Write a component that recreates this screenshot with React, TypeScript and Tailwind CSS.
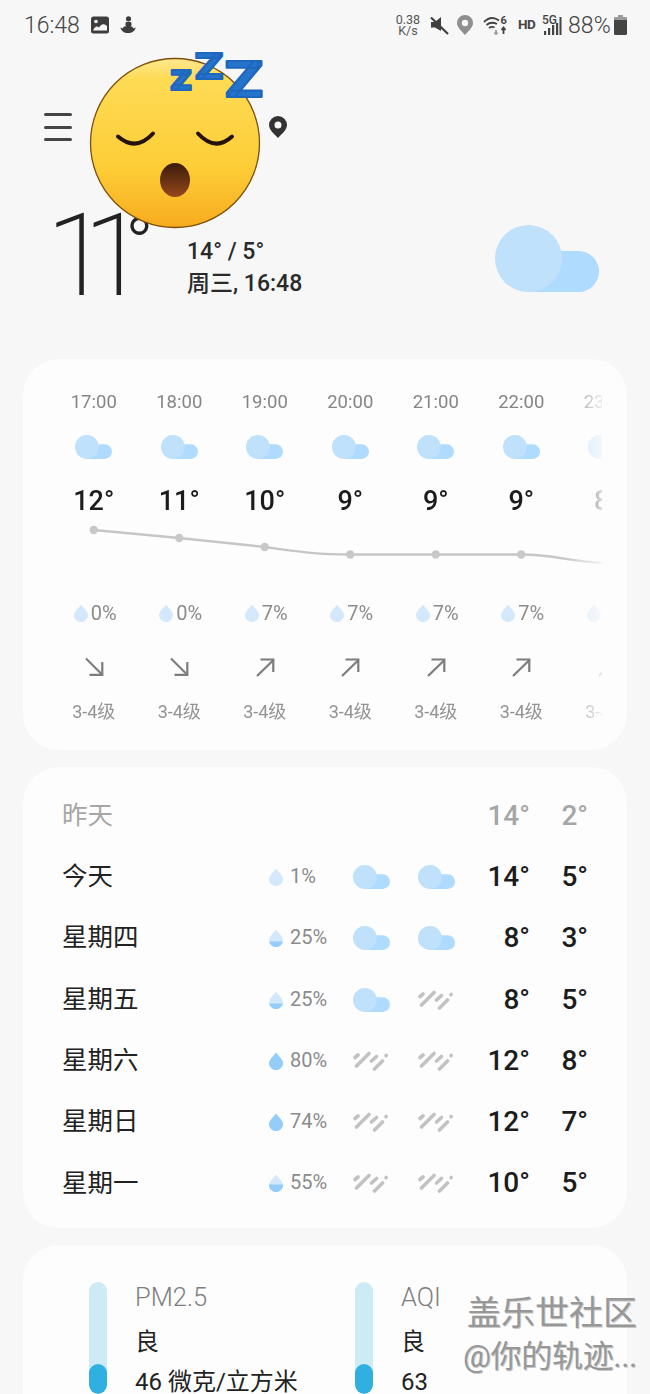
import React from "react";

const FONT = "font-['Roboto','Noto_Sans_CJK_SC',sans-serif]";

function Cloud({ w = 37, h = 24 }: { w?: number; h?: number }) {
  return (
    <svg width={w} height={h} viewBox="0 0 104 67" className="block">
      <path d="M33.500 67 H83.500 A20.500 20.500 0 0 0 83.500 26 H40 Z" fill="#aedbff" />
      <circle cx="33.500" cy="33.500" r="33.500" fill="#bfe1fc" />
    </svg>
  );
}

function Rain() {
  return (
    <svg width="37" height="20" viewBox="0 0 37 20" className="block" stroke="#c2c2c2" strokeWidth="3.600" strokeLinecap="round">
      <path d="M2 6.500 L5 4" />
      <path d="M3.500 15 L16 2.500" />
      <path d="M18.500 10 L23.500 5.500" />
      <path d="M21.500 18 L29.500 10" />
      <path d="M33 4.700 L33.200 4.500" />
    </svg>
  );
}

function Drop({ level, id, size = 14 }: { level: number; id: string; size?: number }) {
  const y = 18 - (18 * level) / 100;
  return (
    <svg width={size} height={size * 1.29} viewBox="0 0 14 18" className="block shrink-0">
      <defs>
        <clipPath id={id}>
          <rect x="0" y={y} width="14" height="18" />
        </clipPath>
      </defs>
      <path d="M7 0.500 C9 3.500 14 7.500 14 11.200 A7 6.800 0 0 1 0 11.200 C0 7.500 5 3.500 7 0.500 Z" fill="#d3e8fa" />
      <path d="M7 0.500 C9 3.500 14 7.500 14 11.200 A7 6.800 0 0 1 0 11.200 C0 7.500 5 3.500 7 0.500 Z" fill="#94cdf9" clipPath={`url(#${id})`} />
    </svg>
  );
}

function Arrow({ up }: { up: boolean }) {
  return (
    <svg width="20" height="20" viewBox="0 0 20 20" fill="none" stroke="#7c7c7c" strokeWidth="2.200" className="block">
      {up ? (
        <g>
          <path d="M2 19 L18.500 3" />
          <path d="M5.500 2.500 H18.300 V15" />
        </g>
      ) : (
        <g>
          <path d="M2 1.500 L18.500 18" />
          <path d="M18.300 5 V17.800 H5.500" />
        </g>
      )}
    </svg>
  );
}

const hours = [
  { t: "17:00", d: "12°", p: "0%", up: false },
  { t: "18:00", d: "11°", p: "0%", up: false },
  { t: "19:00", d: "10°", p: "7%", up: true },
  { t: "20:00", d: "9°", p: "7%", up: true },
  { t: "21:00", d: "9°", p: "7%", up: true },
  { t: "22:00", d: "9°", p: "7%", up: true },
  { t: "23:00", d: "8°", p: "7%", up: true },
];

const days = [
  { n: "今天", p: "1%", l: 0, a: "c", b: "c", hi: "14°", lo: "5°" },
  { n: "星期四", p: "25%", l: 30, a: "c", b: "c", hi: "8°", lo: "3°" },
  { n: "星期五", p: "25%", l: 30, a: "c", b: "r", hi: "8°", lo: "5°" },
  { n: "星期六", p: "80%", l: 100, a: "r", b: "r", hi: "12°", lo: "8°" },
  { n: "星期日", p: "74%", l: 100, a: "r", b: "r", hi: "12°", lo: "7°" },
  { n: "星期一", p: "55%", l: 42, a: "r", b: "r", hi: "10°", lo: "5°" },
];

const dots: [number, number][] = [
  [42.750, 14],
  [128.250, 22],
  [213.750, 31],
  [299.250, 38.500],
  [384.750, 38.500],
  [470.250, 38.500],
];

function Emoji() {
  return (
    <svg width="185" height="185" viewBox="85 50 185 185" className="absolute left-[85px] top-[50px]">
      <defs>
        <linearGradient id="face" x1="0" y1="0" x2="0" y2="1">
          <stop offset="0%" stopColor="#ffe88f" />
          <stop offset="12%" stopColor="#fedb55" />
          <stop offset="65%" stopColor="#fdcd36" />
          <stop offset="100%" stopColor="#f7ab1f" />
        </linearGradient>
        <linearGradient id="mouth" x1="0" y1="0" x2="0" y2="1">
          <stop offset="0%" stopColor="#3b1a0a" />
          <stop offset="100%" stopColor="#96481a" />
        </linearGradient>
      </defs>
      <circle cx="175" cy="143" r="84.500" fill="url(#face)" stroke="#7e4f0c" strokeWidth="1.300" />
      <path d="M118 136.500 Q136 152 153 133.500" fill="none" stroke="#26120a" strokeWidth="4" strokeLinecap="round" />
      <path d="M198 133.500 Q215 152 232 136.500" fill="none" stroke="#26120a" strokeWidth="4" strokeLinecap="round" />
      <ellipse cx="175" cy="180" rx="15" ry="17" fill="url(#mouth)" />
      <g fontFamily="Roboto" fontWeight="900" fill="#2474cc" stroke="#1f66bd" strokeWidth="2" strokeLinejoin="round">
        <text x="170" y="89.500" fontSize="36" textLength="22" lengthAdjust="spacingAndGlyphs">z</text>
        <text x="195" y="79" fontSize="36" textLength="28" lengthAdjust="spacingAndGlyphs">Z</text>
        <text x="225" y="97" fontSize="50" textLength="38" lengthAdjust="spacingAndGlyphs">Z</text>
      </g>
    </svg>
  );
}

function StatusBar() {
  return (
    <div className="flex h-[50px] items-center pl-[24px] pr-[23px] text-[#444]">
      <span className="text-[23px] font-light leading-none">16:48</span>
      <svg width="18" height="18" viewBox="0 0 18 18" className="ml-[11px]">
        <rect x="0" y="0.500" width="18" height="17" rx="2.500" fill="#3d3d3d" />
        <circle cx="5" cy="5.500" r="1.800" fill="#f7f7f7" />
        <path d="M2 14.500 C4 10 6 9.500 8 11.500 C10 9 12 6.500 16 10 V14.500 Z" fill="#f7f7f7" />
      </svg>
      <svg width="16" height="18" viewBox="0 0 16 18" className="ml-[11px]" fill="#3d3d3d">
        <circle cx="8.500" cy="2.800" r="2.600" />
        <path d="M6 6 H11 C12 8 11.500 10 10.500 11 H6.500 C5.500 10 5 8 6 6 Z" />
        <path d="M0.500 11.500 C1 15 4 17 8 17 C12 17 15.500 15 15.500 11.500 L13.500 12.500 C12.500 10.500 11 10 10 10.500 L6.500 10.500 C5 10 3.500 10.500 2.700 12.500 Z" />
      </svg>
      <div className="ml-auto w-[26px] text-center text-[12.500px] leading-[11.500px] text-[#555]">
        <div>0.38</div>
        <div>K/s</div>
      </div>
      <svg width="19" height="19" viewBox="0 0 19 19" className="ml-[9px]" fill="#3f3f3f">
        <path d="M1 6 H5 L11 1 V15 L5 11.500 H1 Z" />
        <path d="M1 1.500 L18 18" stroke="#3f3f3f" strokeWidth="2.200" />
      </svg>
      <svg width="16" height="20" viewBox="0 0 16 20" className="ml-[8px]">
        <path fillRule="evenodd" d="M8 0 A8 8 0 0 1 16 8 C16 12.500 11 16.500 8 20 C5 16.500 0 12.500 0 8 A8 8 0 0 1 8 0 Z M8 4.800 A3.200 3.200 0 1 0 8 11.200 A3.200 3.200 0 1 0 8 4.800 Z" fill="#8f8f8f" />
      </svg>
      <svg width="24" height="20" viewBox="0 0 24 20" className="ml-[10px]" fill="none" stroke="#444" strokeWidth="1.800">
        <path d="M1 7 C6 2 11 2 16 5.500" />
        <path d="M3.500 10 C7 7 10 7 14 9" />
        <path d="M6 13 C8 11.500 9.500 11.500 11.500 12.500" />
        <path d="M9 14.500 L9.100 14.600" />
        <path d="M13 15 V19 M11.500 17.500 L13 19 L14.500 17.500" stroke="#999" />
        <path d="M20.500 19 V13 M18.500 15 L20.500 12.500 L22.500 15" />
        <text x="17.500" y="9" fontSize="11" fontWeight="700" fill="#444" stroke="none" fontFamily="Roboto">6</text>
      </svg>
      <span className="ml-[11px] w-[16px] text-[13.500px] font-bold leading-none tracking-[-0.3px] text-[#444]">HD</span>
      <div className="relative ml-[9px] h-[22px] w-[19px]">
        <span className="absolute left-[-1px] top-[0px] text-[12px] font-medium leading-none text-[#444]">5G</span>
        <svg width="19" height="22" viewBox="0 0 19 22" className="absolute left-0 top-0" fill="#444">
          <rect x="1" y="17" width="2.200" height="4" />
          <rect x="5" y="14" width="2.200" height="7" />
          <rect x="9" y="11" width="2.200" height="10" />
          <rect x="13" y="9" width="2.200" height="12" />
          <rect x="16.500" y="3" width="2" height="18" />
        </svg>
      </div>
      <span className="ml-[6px] text-[23px] font-light leading-none tracking-[0.2px]">88%</span>
      <svg width="13" height="20" viewBox="0 0 13 20" className="ml-[3px]">
        <path d="M4 0 H9 V2 H12 A1 1 0 0 1 13 3 V6 H0 V3 A1 1 0 0 1 1 2 H4 Z" fill="#9b9b9b" />
        <path d="M0 5 H13 V18.500 A1.500 1.500 0 0 1 11.500 20 H1.500 A1.500 1.500 0 0 1 0 18.500 Z" fill="#444" />
      </svg>
    </div>
  );
}

function Header() {
  return (
    <div className="relative">
      <div className="flex h-[148px] items-start pl-[44px] pt-[63px]">
        <div className="flex w-[28px] flex-col gap-[9.500px]">
          <div className="h-[3px] rounded-full bg-[#444]" />
          <div className="h-[3px] rounded-full bg-[#444]" />
          <div className="h-[3px] rounded-full bg-[#444]" />
        </div>
        <svg width="18" height="22" viewBox="0 0 18 22" className="ml-[197px] mt-[3px]">
          <path fillRule="evenodd" d="M9 0 A9 9 0 0 1 18 9 C18 14 12.500 18 9 22 C5.500 18 0 14 0 9 A9 9 0 0 1 9 0 Z M9 5.500 A3.500 3.500 0 1 0 9 12.500 A3.500 3.500 0 1 0 9 5.500 Z" fill="#333" />
        </svg>
      </div>
      <div className="relative flex h-[161px] items-start">
        <div className="relative w-[187px] shrink-0">
          <span className="absolute left-[46px] top-0 text-[115px] font-extralight leading-none tracking-[-26px] text-[#222]">11</span>
          <span className="absolute left-[125px] top-[9px] text-[76px] font-light leading-none text-[#222]">°</span>
        </div>
        <div className="mt-[38px] text-[23px] font-medium leading-[32px] text-[#2a2a2a]">
          <div>14° / 5°</div>
          <div>周三, 16:48</div>
        </div>
        <div className="ml-auto mr-[51px] mt-[27px]">
          <Cloud w={104} h={67} />
        </div>
      </div>
    </div>
  );
}

function Hourly() {
  const Row = ({ children, className = "" }: { children: React.ReactNode; className?: string }) => (
    <div className={`flex w-[600px] ${className}`}>{children}</div>
  );
  const cell = "flex w-[85.500px] shrink-0 justify-center";
  return (
    <div className="mx-[23px] h-[391px] rounded-[36px] bg-[#fdfdfd] pl-[28px] pr-[25px]">
      <div className="overflow-hidden pt-[30px] [mask-image:linear-gradient(to_right,black_93%,rgba(0,0,0,0.15)_100%)]">
        <Row className="h-[26px] items-center text-[18.500px] leading-none text-[#858585]">
          {hours.map((h) => (
            <div key={h.t} className={cell}>{h.t}</div>
          ))}
        </Row>
        <Row className="mt-[20px] h-[24px]">
          {hours.map((h) => (
            <div key={h.t} className={cell}><Cloud /></div>
          ))}
        </Row>
        <Row className="mt-[27px] h-[30px] items-center text-[27px] font-medium leading-none text-[#1c1c1c]">
          {hours.map((h) => (
            <div key={h.t} className={cell}>{h.d}</div>
          ))}
        </Row>
        <svg width="600" height="60" viewBox="0 0 600 60" className="block" fill="none">
          <path d="M42.750 14 L128.250 22 L213.750 31 C250 36 265 38.500 299.250 38.500 L470.250 38.500 C505 38.500 520 46.500 556 47" stroke="#c6c6c6" strokeWidth="2.400" />
          {dots.map(([x, y]) => (
            <circle key={x} cx={x} cy={y} r="4.200" fill="#c8c8c8" />
          ))}
        </svg>
        <Row className="mt-[25px] h-[24px] items-center text-[20px] leading-none text-[#8c8c8c]">
          {hours.map((h, i) => (
            <div key={h.t} className={`${cell} items-center gap-[3px] pl-[3px]`}>
              <Drop level={0} id={`hd${i}`} size={14} />
              <span>{h.p}</span>
            </div>
          ))}
        </Row>
        <Row className="mt-[32px] h-[20px]">
          {hours.map((h) => (
            <div key={h.t} className={cell}><Arrow up={h.up} /></div>
          ))}
        </Row>
        <Row className="mt-[24px] h-[22px] items-center text-[18px] leading-none text-[#939393]">
          {hours.map((h) => (
            <div key={h.t} className={cell}>3-4级</div>
          ))}
        </Row>
      </div>
    </div>
  );
}

const dayGrid = "grid h-[61.300px] grid-cols-[206px_21px_63px_65px_65px_47px_58px] items-center";

function Daily() {
  return (
    <div className="mx-[23px] mt-[17px] h-[461px] rounded-[36px] bg-[#fdfdfd] pl-[40px] pt-[18px]">
      <div className={`${dayGrid} text-[#a6a6a6]`}>
        <div className="ml-[-1px] text-[25.500px] leading-none">昨天</div>
        <div />
        <div />
        <div />
        <div />
        <div className="text-right text-[28px] font-medium leading-none">14°</div>
        <div className="text-right text-[28px] font-medium leading-none">2°</div>
      </div>
      {days.map((d, i) => (
        <div key={d.n} className={dayGrid}>
          <div className="ml-[-1px] text-[25.500px] leading-none text-[#222]">{d.n}</div>
          <Drop level={d.l} id={`dd${i}`} size={14} />
          <div className="pb-[2px] text-[20px] leading-none text-[#8b8b8b]">{d.p}</div>
          <div>{d.a === "c" ? <Cloud /> : <Rain />}</div>
          <div>{d.b === "c" ? <Cloud /> : <Rain />}</div>
          <div className="text-right text-[28px] font-medium leading-none text-[#1c1c1c]">{d.hi}</div>
          <div className="text-right text-[28px] font-medium leading-none text-[#1c1c1c]">{d.lo}</div>
        </div>
      ))}
    </div>
  );
}

function Gauge({ title, lv, val }: { title: string; lv: string; val: string }) {
  return (
    <div className="flex w-[266px] shrink-0">
      <div className="flex h-[112px] w-[18px] shrink-0 flex-col justify-end overflow-hidden rounded-full bg-[#cdebf5]">
        <div className="h-[30px] rounded-full bg-[#2fb0e0]" />
      </div>
      <div className="ml-[28px] whitespace-nowrap">
        <div className="h-[30px] text-[25.500px] font-light leading-[30px] text-[#7d7d7d]">{title}</div>
        <div className="mt-[15px] h-[30px] text-[24px] leading-[30px] text-[#222]">{lv}</div>
        <div className="mt-[10px] h-[30px] text-[24px] leading-[30px] text-[#222]">{val}</div>
      </div>
    </div>
  );
}

function Air() {
  return (
    <div className="mx-[23px] mt-[17px] flex h-[200px] rounded-[36px] bg-[#fdfdfd] pl-[66px] pt-[37px]">
      <Gauge title="PM2.5" lv="良" val="46 微克/立方米" />
      <Gauge title="AQI" lv="良" val="63" />
    </div>
  );
}

export default function App() {
  return (
    <div className={`relative h-[1394px] w-[650px] overflow-hidden bg-[#f7f7f7] ${FONT}`}>
      <StatusBar />
      <Header />
      <Hourly />
      <Daily />
      <Air />
      <Emoji />
      <div className="absolute left-[457px] top-[1293px] flex w-[180px] flex-col items-end text-[#979797] [text-shadow:1px_1px_0_#c9c9c9]">
        <div className="text-[34px] leading-[40px]">盖乐世社区</div>
        <div className="mt-[7px] whitespace-nowrap text-[31px] leading-[34px] tracking-[-0.3px]">@你的轨迹...</div>
      </div>
    </div>
  );
}
